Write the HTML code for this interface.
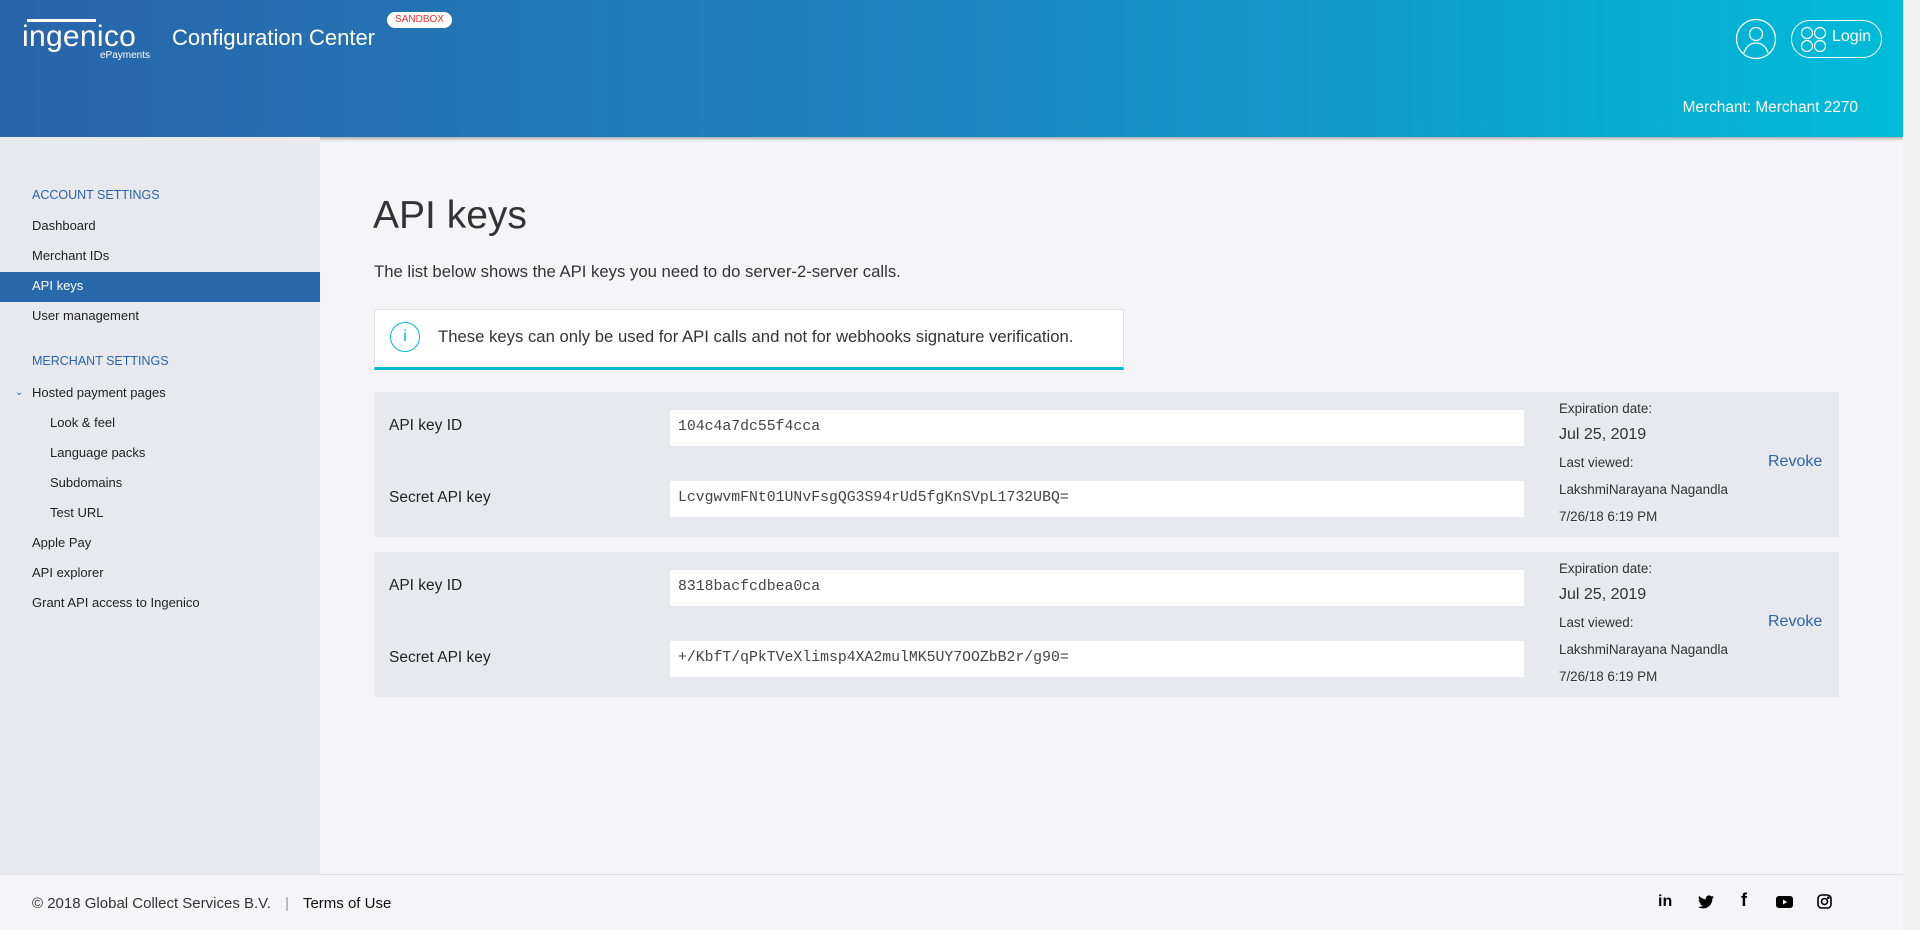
<!DOCTYPE html>
<html><head><meta charset="utf-8"><style>
*{margin:0;padding:0;box-sizing:border-box}
body{width:1920px;height:930px;overflow:hidden;background:#f5f5f8;font-family:"Liberation Sans",sans-serif;color:#222;position:relative}
.a{position:absolute;white-space:nowrap}
#hdr{left:0;top:0;width:1903px;height:137px;background:linear-gradient(90deg,#2a64aa 0%,#1a8ac4 55%,#00bcd9 100%);box-shadow:0 2px 3px rgba(0,0,0,.3)}
#side{left:0;top:137px;width:320px;height:737px;background:#e8e9ee}
.nav{position:absolute;left:32px;font-size:13px;color:#222;line-height:18px}
.sec{color:#2a64aa;font-size:12.5px}
.sub{left:50px}
#act{left:0;top:272px;width:320px;height:30px;background:#2968aa}
.card{position:absolute;left:374px;width:1465px;height:145px;background:#e8e9ee}
.lbl{position:absolute;left:15px;font-size:15.5px;color:#222}
.inp{position:absolute;left:296px;width:854px;height:36px;background:#fff;font-family:"Liberation Mono",monospace;font-size:14.8px;color:#444;padding:9px 0 0 8px}
.r{position:absolute;left:1185px;font-size:13.4px;color:#333}
.rev{position:absolute;left:1394px;font-size:16px;color:#2a64aa}
#foot{left:0;top:874px;width:1903px;height:56px;background:#f5f5f8;border-top:1px solid #e0e1e6}
#sb{left:1903px;top:0;width:17px;height:930px;background:#f1f1f1}
</style></head><body>
<div class="a" id="hdr"></div>
<div class="a" style="left:27px;top:19px;width:69px;height:3px;background:#fff"></div>
<div class="a" style="left:22px;top:20px;font-size:30px;color:#fff;letter-spacing:0.3px">ingenico</div>
<div class="a" style="left:100px;top:50px;font-size:10px;color:#fff">ePayments</div>
<div class="a" style="left:172px;top:25px;font-size:22px;color:#fff">Configuration Center</div>
<div class="a" style="left:387px;top:12px;width:65px;height:16px;border-radius:8px;background:#fff;color:#e33;font-size:10px;text-align:center;line-height:16px">SANDBOX</div>
<svg class="a" style="left:1735px;top:18px" width="42" height="42" viewBox="0 0 42 42" fill="none" stroke="#fff" stroke-width="1.3"><circle cx="21" cy="21" r="19.5"/><circle cx="21" cy="16" r="6.5"/><path d="M9 35c2-7 7-10 12-10s10 3 12 10"/></svg>
<div class="a" style="left:1791px;top:20px;width:91px;height:38px;border:1.3px solid #fff;border-radius:19px"></div>
<svg class="a" style="left:1800px;top:26px" width="28" height="28" fill="none" stroke="#fff" stroke-width="1.2"><circle cx="7" cy="7" r="5.5"/><circle cx="20" cy="7" r="5.5"/><circle cx="7" cy="20" r="5.5"/><circle cx="20" cy="20" r="5.5"/></svg>
<div class="a" style="left:1832px;top:28px;font-size:16px;color:#fff">Login</div>
<div class="a" style="left:1658px;top:99px;font-size:15.4px;color:#fff;width:200px;text-align:right">Merchant: Merchant 2270</div>

<div class="a" id="side"></div>
<div class="a" id="act"></div>
<div class="nav sec" style="top:186px">ACCOUNT SETTINGS</div>
<div class="nav" style="top:217px">Dashboard</div>
<div class="nav" style="top:247px">Merchant IDs</div>
<div class="nav" style="top:277px;color:#fff">API keys</div>
<div class="nav" style="top:307px">User management</div>
<div class="nav sec" style="top:352px">MERCHANT SETTINGS</div>
<div class="nav" style="top:384px;left:15px;font-size:10px;color:#2a64aa">&#8964;</div>
<div class="nav" style="top:384px">Hosted payment pages</div>
<div class="nav sub" style="top:414px">Look &amp; feel</div>
<div class="nav sub" style="top:444px">Language packs</div>
<div class="nav sub" style="top:474px">Subdomains</div>
<div class="nav sub" style="top:504px">Test URL</div>
<div class="nav" style="top:534px">Apple Pay</div>
<div class="nav" style="top:564px">API explorer</div>
<div class="nav" style="top:594px">Grant API access to Ingenico</div>

<div class="a" style="left:373px;top:194px;font-size:39px;color:#333">API keys</div>
<div class="a" style="left:374px;top:262px;font-size:16.7px;color:#333">The list below shows the API keys you need to do server-2-server calls.</div>
<div class="a" style="left:374px;top:309px;width:750px;height:61px;background:#fff;border:1px solid #e0e1e6;border-bottom:3px solid #00b8d6"></div>
<div class="a" style="left:390px;top:322px;width:30px;height:30px;border:1.3px solid #00b8d6;border-radius:50%;color:#00b8d6;font-size:16px;text-align:center;line-height:28px">i</div>
<div class="a" style="left:438px;top:327px;font-size:16.7px;color:#333">These keys can only be used for API calls and not for webhooks signature verification.</div>

<div class="card" style="top:392px">
<div class="lbl" style="top:25px">API key ID</div>
<div class="lbl" style="top:97px">Secret API key</div>
<div class="inp" style="top:18px">104c4a7dc55f4cca</div>
<div class="inp" style="top:89px">LcvgwvmFNt01UNvFsgQG3S94rUd5fgKnSVpL1732UBQ=</div>
<div class="r" style="top:9px">Expiration date:</div>
<div class="r" style="top:34px;font-size:16px">Jul 25, 2019</div>
<div class="r" style="top:63px">Last viewed:</div>
<div class="r" style="top:90px">LakshmiNarayana Nagandla</div>
<div class="r" style="top:117px">7/26/18 6:19 PM</div>
<div class="rev" style="top:61px">Revoke</div>
</div>
<div class="card" style="top:552px">
<div class="lbl" style="top:25px">API key ID</div>
<div class="lbl" style="top:97px">Secret API key</div>
<div class="inp" style="top:18px">8318bacfcdbea0ca</div>
<div class="inp" style="top:89px">+/KbfT/qPkTVeXlimsp4XA2mulMK5UY7OOZbB2r/g90=</div>
<div class="r" style="top:9px">Expiration date:</div>
<div class="r" style="top:34px;font-size:16px">Jul 25, 2019</div>
<div class="r" style="top:63px">Last viewed:</div>
<div class="r" style="top:90px">LakshmiNarayana Nagandla</div>
<div class="r" style="top:117px">7/26/18 6:19 PM</div>
<div class="rev" style="top:61px">Revoke</div>
</div>

<div class="a" id="foot"></div>
<div class="a" style="left:32px;top:895px;font-size:15px;color:#333">© 2018 Global Collect Services B.V. <span style="color:#999;margin:0 10px">|</span> <span style="color:#111">Terms of Use</span></div>
<div class="a" style="left:1658px;top:893px;font-size:16px;font-weight:bold;color:#000">in</div>
<svg class="a" style="left:1698px;top:895px" width="16" height="14" viewBox="0 0 24 20"><path d="M24 2.4c-.9.4-1.8.7-2.8.8 1-.6 1.8-1.6 2.2-2.7-1 .6-2 1-3.1 1.2C19.3.7 18 0 16.6 0c-2.7 0-4.9 2.2-4.9 4.9 0 .4 0 .8.1 1.1C7.7 5.8 4.1 3.9 1.7.9c-.4.7-.7 1.6-.7 2.5 0 1.7.9 3.2 2.2 4.1-.8 0-1.600-.2-2.2-.6v.1c0 2.4 1.7 4.4 3.9 4.8-.4.1-.8.2-1.3.2-.3 0-.6 0-.9-.1.6 2 2.4 3.4 4.6 3.4-1.7 1.3-3.8 2.1-6.1 2.1H0c2.2 1.4 4.8 2.2 7.5 2.2 9.1 0 14-7.5 14-14v-.6c1-.7 1.8-1.6 2.5-2.6z"/></svg>
<div class="a" style="left:1741px;top:890px;font-size:18px;font-weight:bold;color:#000">f</div>
<svg class="a" style="left:1776px;top:896px" width="17" height="12" viewBox="0 0 17 12"><rect width="17" height="12" rx="3"/><path d="M7 3.5v5l4-2.5z" fill="#fff"/></svg>
<svg class="a" style="left:1817px;top:894px" width="15" height="15" fill="none" stroke="#000" stroke-width="1.6"><rect x="1" y="1" width="13" height="13" rx="3.5"/><circle cx="7.5" cy="7.5" r="3"/><circle cx="11.3" cy="3.7" r=".5" fill="#000"/></svg>
<div class="a" id="sb"></div>
</body></html>
